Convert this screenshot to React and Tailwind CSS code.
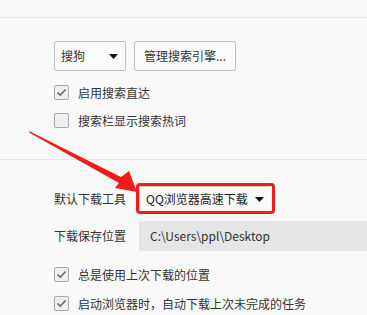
import React from 'react';

const font = { fontFamily: '"Noto Sans CJK SC", "Noto Sans", sans-serif' };

function Check({ checked }) {
  return (
    <div className="w-[15px] h-[15px] rounded-[2px] border border-[#a9a9a9] bg-[#efefef] flex items-center justify-center shrink-0">
      {checked && (
        <svg width="11" height="11" viewBox="0 0 11 11">
          <path d="M1.5 5.5 L4.3 8.2 L9.5 2.5" fill="none" stroke="#666" strokeWidth="1.6" />
        </svg>
      )}
    </div>
  );
}

function Caret() {
  return (
    <svg width="9" height="5" viewBox="0 0 9 5">
      <path d="M0 0 H9 L4.5 5 Z" fill="#111" />
    </svg>
  );
}

function CheckRow({ checked, label, className }) {
  return (
    <div className={`flex items-center gap-[9px] h-[15px] leading-[15px] ${className}`}>
      <Check checked={checked} />
      <span>{label}</span>
    </div>
  );
}

export default function App() {
  return (
    <div className="w-[367px] h-[315px] bg-[#f9f9f9] relative overflow-hidden text-[12px] text-[#333]" style={font}>
      <div className="h-[18px] border-b border-[#e6e6e6]" />

      <div className="pl-[54px] pt-[23px] h-[142px] border-b border-[#e6e6e6]">
        <div className="flex gap-[8px]">
          <div className="w-[72px] h-[30px] border border-[#bdbdbd] rounded-[2px] bg-[#fbfbfb] flex items-center justify-between pl-[6px] pr-[7px]">
            <span>搜狗</span>
            <Caret />
          </div>
          <div className="w-[102px] h-[30px] border border-[#bdbdbd] rounded-[2px] bg-[#fbfbfb] flex items-center justify-center">
            管理搜索引擎...
          </div>
        </div>
        <CheckRow checked label="启用搜索直达" className="mt-[14px]" />
        <CheckRow label="搜索栏显示搜索热词" className="mt-[13px]" />
      </div>

      <div className="pl-[54px] pt-[23px]">
        <div className="flex items-center">
          <span className="w-[82px]">默认下载工具</span>
          <div className="w-[139px] h-[31px] border-[3px] border-[#f01c1c] rounded-[4px] flex items-center">
            <div className="w-[131px] h-[25px] border-t border-l border-[#c8c8c8] flex items-center justify-between pl-[6px] pr-[6px] text-[#222]">
              <span>QQ浏览器高速下载</span>
              <Caret />
            </div>
          </div>
        </div>
        <div className="flex items-center mt-[7px]">
          <span className="w-[85px]">下载保存位置</span>
          <div className="flex-1 h-[30px] bg-[#e5e5e5] rounded-l-[2px] flex items-center pl-[11px] text-[#333]">
            C:\Users\ppl\Desktop
          </div>
        </div>
        <CheckRow checked label="总是使用上次下载的位置" className="mt-[16px]" />
        <CheckRow checked label="启动浏览器时，自动下载上次未完成的任务" className="mt-[14px]" />
      </div>

      <svg className="absolute left-0 top-0" width="367" height="315" viewBox="0 0 367 315">
        <polygon
          points="29,131 121,177 129,171 137,192 115,188 119,183 30,133"
          fill="#f41a1a"
        />
      </svg>
    </div>
  );
}
